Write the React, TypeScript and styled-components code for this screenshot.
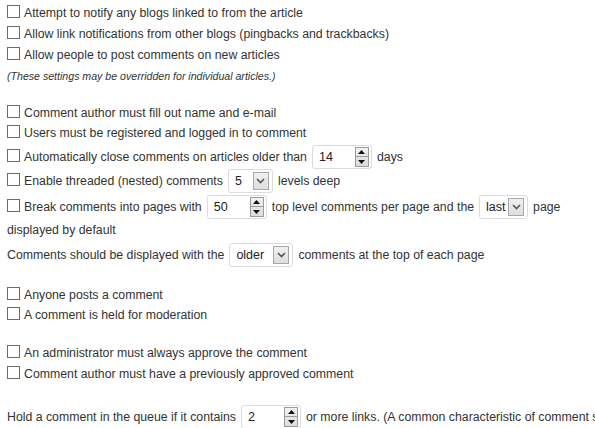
import styled, { createGlobalStyle } from "styled-components";

const Global = createGlobalStyle`
  html, body {
    margin: 0;
    background: #ffffff;
  }
  body {
    padding: 3px 7px;
    overflow: hidden;
    font-family: "Liberation Sans", Arial, sans-serif;
    font-size: 12.3px;
    color: #333333;
  }
`;

const Group = styled.div<{ $top?: number }>`
  margin-top: ${(p) => p.$top ?? 0}px;
`;

const Row = styled.div<{ $h?: number }>`
  height: ${(p) => p.$h ?? 21}px;
  line-height: ${(p) => p.$h ?? 21}px;
  white-space: nowrap;
`;

const Para = styled.div<{ $top?: number }>`
  margin-top: ${(p) => p.$top ?? 0}px;
  width: 565px;
  line-height: 23px;
`;

const Note = styled.div`
  height: 21px;
  line-height: 21px;
  font-size: 10.6px;
  font-style: italic;
`;

const Box = styled.span`
  display: inline-block;
  vertical-align: middle;
  width: 11px;
  height: 11px;
  margin: -4px 4px 0 0;
  border: 1px solid #6b6b6b;
  background: #ffffff;
`;

const Field = styled.span<{ $w: number }>`
  position: relative;
  display: inline-block;
  vertical-align: middle;
  box-sizing: border-box;
  width: ${(p) => p.$w}px;
  height: 24px;
  margin: -6px 5px -4px 5px;
  padding-left: 6px;
  border: 1px solid #dcdcdc;
  border-radius: 3px;
  background: #ffffff;
  line-height: 22px;
  color: #222222;
  font-size: 12.5px;
`;

const Spin = styled.span`
  position: absolute;
  top: 1px;
  right: 2px;
  width: 14px;
  height: 20px;
  display: flex;
  flex-direction: column;
  border: 1px solid #9b9b9b;
  box-sizing: border-box;
  background: linear-gradient(#f2f2f2, #dcdcdc);
`;

const SpinHalf = styled.span<{ $down?: boolean }>`
  flex: 1;
  display: flex;
  align-items: center;
  justify-content: center;
  border-top: ${(p) => (p.$down ? "1px solid #9b9b9b" : "none")};
`;

const Arrow = styled.span`
  position: absolute;
  top: 2px;
  right: 3px;
  width: 16px;
  height: 18px;
  box-sizing: border-box;
  border: 1px solid #a8a8a8;
  background: linear-gradient(#f0f0f0, #dedede);
  display: flex;
  align-items: center;
  justify-content: center;
`;

function Tri({ down }: { down?: boolean }) {
  return (
    <svg width="7" height="4" viewBox="0 0 7 4">
      <polygon points={down ? "0,0 7,0 3.5,4" : "3.5,0 7,4 0,4"} fill="#111" />
    </svg>
  );
}

function NumberField({ value }: { value: string }) {
  return (
    <Field $w={60}>
      {value}
      <Spin>
        <SpinHalf>
          <Tri />
        </SpinHalf>
        <SpinHalf $down>
          <Tri down />
        </SpinHalf>
      </Spin>
    </Field>
  );
}

function SelectField({ value, w }: { value: string; w: number }) {
  return (
    <Field $w={w}>
      {value}
      <Arrow>
        <svg width="9" height="6" viewBox="0 0 9 6">
          <polyline points="1,1 4.5,4.5 8,1" fill="none" stroke="#555" strokeWidth="1.6" />
        </svg>
      </Arrow>
    </Field>
  );
}

function Check({ label, h, children }: { label?: string; h?: number; children?: React.ReactNode }) {
  return (
    <Row $h={h}>
      <Box />
      {label}
      {children}
    </Row>
  );
}

export default function App() {
  return (
    <>
      <Global />
      <Group>
        <Check label="Attempt to notify any blogs linked to from the article" />
        <Check label="Allow link notifications from other blogs (pingbacks and trackbacks)" />
        <Check label="Allow people to post comments on new articles" />
        <Note>(These settings may be overridden for individual articles.)</Note>
      </Group>
      <Group $top={16}>
        <Check label="Comment author must fill out name and e-mail" h={20} />
        <Check label="Users must be registered and logged in to comment" h={20} />
        <Check h={28}>
          Automatically close comments on articles older than
          <NumberField value="14" />
          days
        </Check>
        <Check h={20}>
          Enable threaded (nested) comments
          <SelectField value="5" w={45} />
          levels deep
        </Check>
        <Para $top={5}>
          <Box />
          Break comments into pages with
          <NumberField value="50" />
          top level comments per page and the
          <SelectField value="last" w={49} />
          page displayed by default
        </Para>
        <Row $h={26}>
          Comments should be displayed with the
          <SelectField value="older" w={64} />
          comments at the top of each page
        </Row>
      </Group>
      <Group $top={17}>
        <Check label="Anyone posts a comment" h={20} />
        <Check label="A comment is held for moderation" h={20} />
      </Group>
      <Group $top={18}>
        <Check label="An administrator must always approve the comment" />
        <Check label="Comment author must have a previously approved comment" />
      </Group>
      <Group $top={22}>
        <Row $h={20}>
          Hold a comment in the queue if it contains
          <NumberField value="2" />
          or more links. (A common characteristic of comment spam is a large number of hyperlinks.)
        </Row>
      </Group>
    </>
  );
}
